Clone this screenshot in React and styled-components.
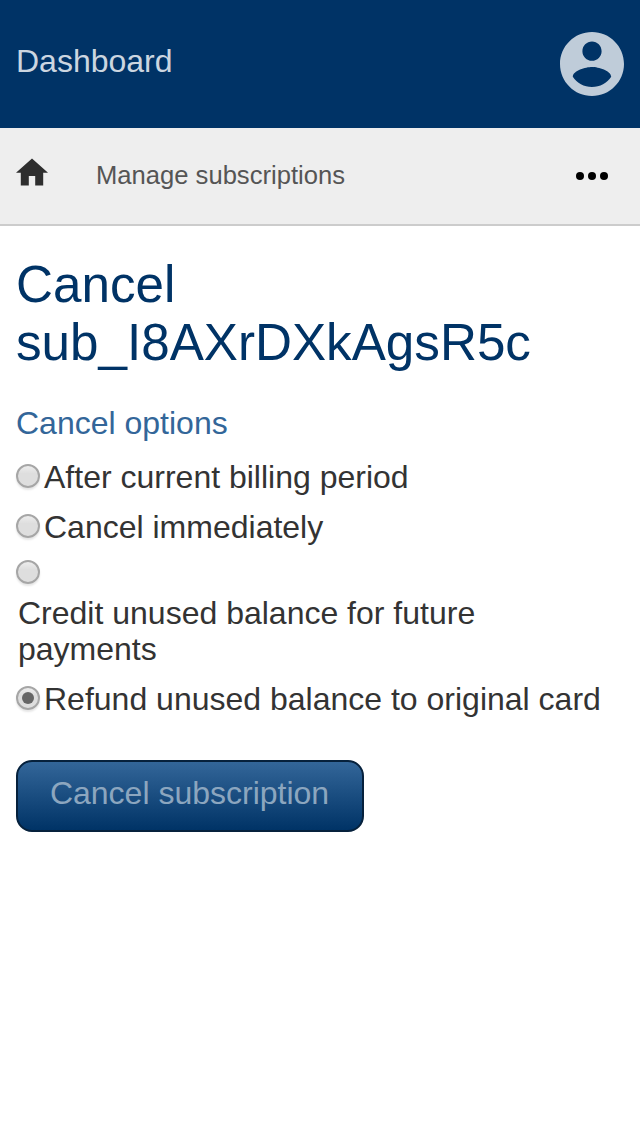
import React from "react";
import styled, { createGlobalStyle } from "styled-components";

const Global = createGlobalStyle`
  * { box-sizing: border-box; }
  body { margin: 0; background: #fff; font-family: "Liberation Sans", Arial, sans-serif; color: #333; }
`;
const Header = styled.header`
  display: flex; align-items: center; justify-content: space-between;
  height: 128px; padding: 0 16px; background: #003366;
`;
const Brand = styled.span`
  font-size: 32px; line-height: 36px; color: #ccd6e0; margin-top: -6px;
`;
const Nav = styled.nav`
  display: flex; align-items: center; height: 98px; padding: 0 32px 0 16px;
  background: #eee; border-bottom: 2px solid #ccc;
`;
const Crumb = styled.span`
  flex: 1; margin-left: 48px; font-size: 25.6px; line-height: 30px; color: #555; margin-top: -3px;
`;
const Icon = styled.svg`
  display: block; flex: none; width: ${(p) => p.$w}px; height: ${(p) => p.$h}px; fill: ${(p) => p.$color};
`;
const HomeIcon = styled(Icon)`
  margin-bottom: 8px;
`;
const Main = styled.main`
  padding: 30px 16px 0;
`;
const Title = styled.h1`
  margin: 0; font-size: 51.2px; line-height: 58px; font-weight: 400; color: #003366;
`;
const Subtitle = styled.h2`
  margin: 33px 0 0; font-size: 32px; line-height: 36px; font-weight: 400; color: #336699;
`;
const Options = styled.div`
  margin-top: 11px;
`;
const Option = styled.label`
  display: flex; flex-direction: ${(p) => (p.$stacked ? "column" : "row")};
  align-items: flex-start; gap: ${(p) => (p.$stacked ? 11 : 4)}px; padding: 7px 0;
`;
const Radio = styled.span`
  display: grid; place-items: center; flex: none; width: 24px; height: 24px; margin-top: ${(p) => p.$top ?? 5}px;
  border: 2px solid #a6a6a6; border-radius: 50%;
  background: linear-gradient(#ededed, #dedede 38%, #dedede);
  box-shadow: 0 2px 2px rgba(0, 0, 0, 0.1);
  &::after {
    content: ""; width: 12px; height: 12px; border-radius: 50%;
    background: ${(p) => (p.$checked ? "#666" : "transparent")};
  }
`;
const Text = styled.span`
  font-size: 32px; line-height: 36px;
`;
const WrappedText = styled(Text)`
  margin-left: 2px; max-width: 520px;
`;
const Button = styled.button`
  display: block; width: 348px; height: 72px; margin: 36px 0 0; padding: 0 1px 6px 0;
  border: 2px solid #06213c; border-radius: 16px;
  background: linear-gradient(#336699, #003366);
  font: 32px/36px "Liberation Sans", Arial, sans-serif; color: #8ca6bf;
`;

export default function App() {
  return (
    <>
      <Global />
      <Header>
        <Brand>Dashboard</Brand>
        <Icon $w={64} $h={64} $color="#bfccd9" viewBox="2 2 20 20">
          <path d="M12 2C6.48 2 2 6.48 2 12s4.48 10 10 10 10-4.48 10-10S17.52 2 12 2zm0 3c1.66 0 3 1.34 3 3s-1.34 3-3 3-3-1.34-3-3 1.34-3 3-3zm0 14.2c-2.5 0-4.71-1.28-6-3.22.03-1.99 4-3.08 6-3.08 1.99 0 5.97 1.09 6 3.08-1.29 1.94-3.5 3.22-6 3.22z" />
        </Icon>
      </Header>
      <Nav>
        <HomeIcon $w={32} $h={32} $color="#2e2e2e" viewBox="2 1.5 20 20">
          <path d="M10 20v-6h4v6h5v-8h3L12 3 2 12h3v8z" />
        </HomeIcon>
        <Crumb>Manage subscriptions</Crumb>
        <Icon $w={32} $h={8} $color="#000" viewBox="0 0 32 8">
          <circle cx="4" cy="4" r="4" /><circle cx="16" cy="4" r="4" /><circle cx="28" cy="4" r="4" />
        </Icon>
      </Nav>
      <Main>
        <Title>Cancel<br />sub_I8AXrDXkAgsR5c</Title>
        <Subtitle>Cancel options</Subtitle>
        <Options>
          <Option><Radio /><Text>After current billing period</Text></Option>
          <Option><Radio /><Text>Cancel immediately</Text></Option>
          <Option $stacked><Radio $top={1} /><WrappedText>Credit unused balance for future payments</WrappedText></Option>
          <Option><Radio $checked /><Text>Refund unused balance to original card</Text></Option>
        </Options>
        <Button>Cancel subscription</Button>
      </Main>
    </>
  );
}
